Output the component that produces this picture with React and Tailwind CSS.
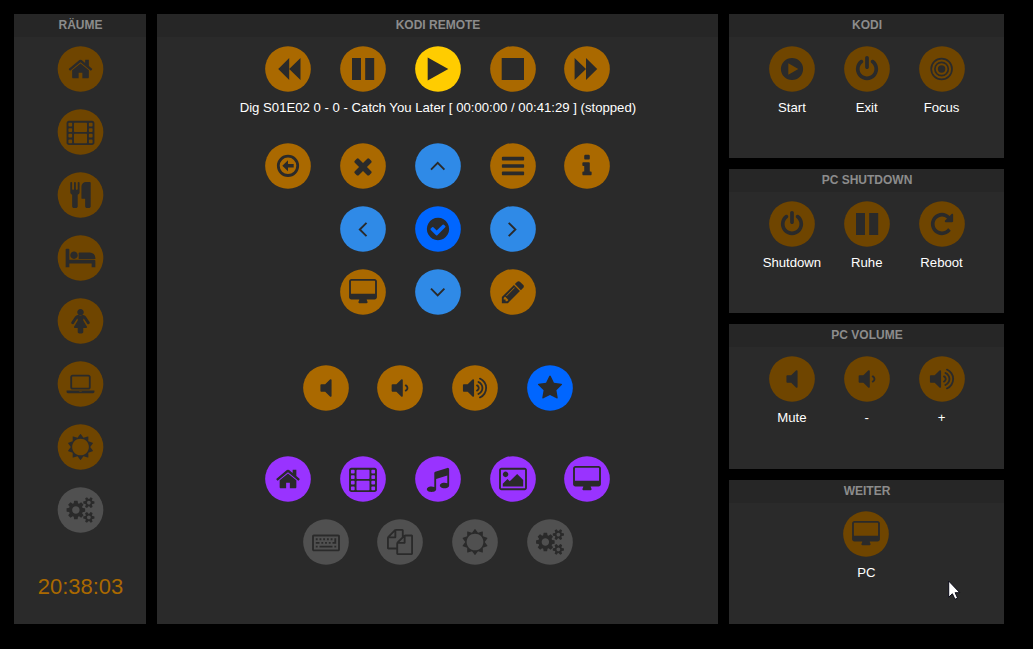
import React from "react";

const VOLUME_BODY = "v1088q0 26-19 45t-45 19-45-19l-333-333h-262q-26 0-45-19t-19-45v-384q0-26 19-45t45-19h262l333-333q19-19 45-19t45 19 19 45z";
const VOLUME_WAVE = "m384 544q0 76-42.500 141.500t-112.500 93.500q-10 5-25 5-26 0-45-18.500t-19-45.500q0-21 12-35.500t29-25 34-23 29-36 12-56.500-12-56.500-29-36-34-23-29-25-12-35.500q0-27 19-45.500t45-18.500q15 0 25 5 70 27 112.500 93t42.500 142z";
const VOLUME_WAVES = "m256 0q0 153-85 282.500t-225 188.500q-13 5-25 5-27 0-46-19t-19-45q0-39 39-59 56-29 76-44 74-54 115.500-135.500t41.500-173.500-41.500-173.500-115.500-135.500q-20-15-76-44-39-20-39-59 0-26 19-45t45-19q13 0 26 5 140 59 225 188.500t85 282.500zm256 0q0 230-127 422.500t-338 283.500q-13 5-26 5-26 0-45-19t-19-45q0-36 39-59 7-4 22.500-10.500t22.500-10.500q46-25 82-51 123-91 192-227t69-289-69-289-192-227q-36-26-82-51-7-4-22.500-10.500t-22.500-10.500q-39-23-39-59 0-26 19-45t45-19q13 0 26 5 211 91 338 283.500t127 422.500z";

// Glyphs on a 1792-unit grid
const GLYPHS = {
  home: "M1472 992v480q0 26-19 45t-45 19h-384v-384h-256v384h-384q-26 0-45-19t-19-45v-480q0-1 .5-3t.5-3l575-474 575 474q1 2 1 6zm223-69l-62 74q-8 9-21 11h-3q-13 0-21-7l-692-577-692 577q-12 8-24 7-13-2-21-11l-62-74q-8-10-7-23.500t11-21.500l719-599q32-26 76-26t76 26l244 204v-195q0-14 9-23t23-9h192q14 0 23 9t9 23v408l219 182q10 8 11 21.500t-7 23.500z",
  cutlery: "M832 64v640q0 61-35.500 111t-92.500 70v779q0 52-38 90t-90 38h-128q-52 0-90-38t-38-90v-779q-57-20-92.500-70t-35.500-111v-640q0-26 19-45t45-19 45 19 19 45v416q0 26 19 45t45 19 45-19 19-45v-416q0-26 19-45t45-19 45 19 19 45v416q0 26 19 45t45 19 45-19 19-45v-416q0-26 19-45t45-19 45 19 19 45zm768 0v1600q0 52-38 90t-90 38h-128q-52 0-90-38t-38-90v-512h-224q-13 0-22.500-9.500t-9.500-22.500v-800q0-132 94-226t226-94h256q26 0 45 19t19 45z",
  bed: "M128 1024h1728q26 0 45 19t19 45v448h-256v-256h-1536v256h-256v-1216q0-26 19-45t45-19h128q26 0 45 19t19 45v704zm576-320q0-106-75-181t-181-75-181 75-75 181 75 181 181 75 181-75 75-181zm1216 256v-64q0-159-112.500-271.500t-271.500-112.500h-704q-26 0-45 19t-19 45v384h1152z",
  female: "M1536 1024q0 40-28 68t-68 28q-51 0-80-43l-227-341h-45v132l247 411q9 15 9 33 0 26-19 45t-45 19h-192v272q0 46-33 79t-79 33h-160q-46 0-79-33t-33-79v-272h-192q-26 0-45-19t-19-45q0-18 9-33l247-411v-132h-45l-227 341q-29 43-80 43-40 0-68-28t-28-68q0-29 16-53l256-384q73-107 176-107h384q103 0 176 107l256 384q16 24 16 53zm-416-736q0 93-65.500 158.500t-158.500 65.500-158.500-65.500-65.500-158.500 65.500-158.500 158.500-65.500 158.500 65.500 65.500 158.500z",
  laptop: "M352 1280q-66 0-113-47t-47-113v-704q0-66 47-113t113-47h1088q66 0 113 47t47 113v704q0 66-47 113t-113 47h-1088zm-32-864v704q0 13 9.500 22.500t22.500 9.500h1088q13 0 22.500-9.500t9.500-22.500v-704q0-13-9.500-22.500t-22.500-9.500h-1088q-13 0-22.500 9.500t-9.500 22.500zm1376 928h160v96q0 40-47 68t-113 28h-1600q-66 0-113-28t-47-68v-96h1760zm-720 96q16 0 16-16t-16-16h-160q-16 0-16 16t16 16h160z",
  sun: "M1472 896q0-117-45.500-223.500t-123-184-184-123-223.500-45.500-223.500 45.500-184 123-123 184-45.500 223.500 45.500 223.500 123 184 184 123 223.500 45.500 223.500-45.500 184-123 123-184 45.500-223.500zm276 277q-4 15-20 20l-292 96v306q0 16-13 26-15 10-29 4l-292-94-180 248q-10 13-26 13t-26-13l-180-248-292 94q-14 6-29-4-13-10-13-26v-306l-292-96q-16-5-20-20-5-17 4-29l180-248-180-248q-9-13-4-29 4-15 20-20l292-96v-306q0-16 13-26 15-10 29-4l292 94 180-248q9-12 26-12t26 12l180 248 292-94q14-6 29 4 13 10 13 26v306l292 96q16 5 20 20 5 16-4 29l-180 248 180 248q9 12 4 29z",
  gears: "M832 896q0-106-75-181t-181-75-181 75-75 181 75 181 181 75 181-75 75-181zm768 512q0-52-38-90t-90-38-90 38-38 90q0 53 37.500 90.500t90.500 37.500 90.500-37.500 37.500-90.500zm0-1024q0-52-38-90t-90-38-90 38-38 90q0 53 37.500 90.500t90.500 37.500 90.500-37.500 37.500-90.500zm-384 421v185q0 10-7 19.500t-16 10.500l-155 24q-11 35-32 76 34 48 90 115 7 11 7 20 0 12-7 19-23 30-82.500 89.500t-78.500 59.500q-11 0-21-7l-115-90q-37 19-77 31-11 108-23 155-7 24-30 24h-186q-11 0-20-7.500t-10-17.500l-23-153q-34-10-75-31l-118 89q-7 7-20 7-11 0-21-8-144-133-144-160 0-9 7-19 10-14 41-53t47-61q-23-44-35-82l-152-24q-10-1-17-9.500t-7-19.500v-185q0-10 7-19.500t16-10.500l155-24q11-35 32-76-34-48-90-115-7-11-7-20 0-12 7-20 22-30 82-89t79-59q11 0 21 7l115 90q34-18 77-32 11-108 23-154 7-24 30-24h186q11 0 20 7.500t10 17.500l23 153q34 10 75 31l118-89q8-7 20-7 11 0 21 8 144 133 144 160 0 9-7 19-12 16-42 54t-45 60q23 48 34 82l152 23q10 2 17 10.500t7 19.500zm640 533v140q0 16-149 31-12 27-30 52 51 113 51 138 0 4-4 7-122 71-124 71-8 0-46-47t-52-68q-20 2-30 2t-30-2q-14 21-52 68t-46 47q-2 0-124-71-4-3-4-7 0-25 51-138-18-25-30-52-149-15-149-31v-140q0-16 149-31 13-29 30-52-51-113-51-138 0-4 4-7 4-2 35-20t59-34 30-16q8 0 46 46.500t52 67.500q20-2 30-2t30 2q51-71 92-112l6-2q4 0 124 70 4 3 4 7 0 25-51 138 17 23 30 52 149 15 149 31zm0-1024v140q0 16-149 31-12 27-30 52 51 113 51 138 0 4-4 7-122 71-124 71-8 0-46-47t-52-68q-20 2-30 2t-30-2q-14 21-52 68t-46 47q-2 0-124-71-4-3-4-7 0-25 51-138-18-25-30-52-149-15-149-31v-140q0-16 149-31 13-29 30-52-51-113-51-138 0-4 4-7 4-2 35-20t59-34 30-16q8 0 46 46.500t52 67.500q20-2 30-2t30 2q51-71 92-112l6-2q4 0 124 70 4 3 4 7 0 25-51 138 17 23 30 52 149 15 149 31z",
  times: "M1490 1322q0 40-28 68l-136 136q-28 28-68 28t-68-28l-294-294-294 294q-28 28-68 28t-68-28l-136-136q-28-28-28-68t28-68l294-294-294-294q-28-28-28-68t28-68l136-136q28-28 68-28t68 28l294 294 294-294q28-28 68-28t68 28l136 136q28 28 28 68t-28 68l-294 294 294 294q28 28 28 68z",
  bars: "M1664 1344v128q0 26-19 45t-45 19h-1408q-26 0-45-19t-19-45v-128q0-26 19-45t45-19h1408q26 0 45 19t19 45zm0-512v128q0 26-19 45t-45 19h-1408q-26 0-45-19t-19-45v-128q0-26 19-45t45-19h1408q26 0 45 19t19 45zm0-512v128q0 26-19 45t-45 19h-1408q-26 0-45-19t-19-45v-128q0-26 19-45t45-19h1408q26 0 45 19t19 45z",
  info: "M1216 1344v128q0 26-19 45t-45 19h-512q-26 0-45-19t-19-45v-128q0-26 19-45t45-19h64v-384h-64q-26 0-45-19t-19-45v-128q0-26 19-45t45-19h384q26 0 45 19t19 45v576h64q26 0 45 19t19 45zm-128-1152v192q0 26-19 45t-45 19h-256q-26 0-45-19t-19-45v-192q0-26 19-45t45-19h256q26 0 45 19t19 45z",
  check: "M1412 734q0-28-18-46l-91-90q-19-19-45-19t-45 19l-408 407-226-226q-19-19-45-19t-45 19l-91 90q-18 18-18 46 0 27 18 45l362 362q19 19 45 19 27 0 46-19l543-543q18-18 18-45zm252 162q0 209-103 385.500t-279.500 279.500-385.500 103-385.500-103-279.500-279.500-103-385.500 103-385.500 279.500-279.500 385.500-103 385.500 103 279.500 279.500 103 385.500z",
  desktop: "M1728 992v-832q0-13-9.500-22.500t-22.500-9.500h-1600q-13 0-22.500 9.500t-9.500 22.500v832q0 13 9.500 22.500t22.500 9.500h1600q13 0 22.500-9.500t9.500-22.500zm128-832v1088q0 66-47 113t-113 47h-544q0 37 16 77.500t32 71 16 43.500q0 26-19 45t-45 19h-512q-26 0-45-19t-19-45q0-14 16-44t32-70 16-78h-544q-66 0-113-47t-47-113v-1088q0-66 47-113t113-47h1600q66 0 113 47t47 113z",
  pencil: "M491 1536l91-91-235-235-91 91v107h128v128h107zm523-928q0-22-22-22-10 0-17 7l-542 542q-7 7-7 17 0 22 22 22 10 0 17-7l542-542q7-7 7-17zm-54-192l416 416-832 832h-416v-416zm683 96q0 53-37 90l-166 166-416-416 166-165q36-38 90-38 53 0 91 38l235 234q37 39 37 91z",
  mute: "M1280 352" + VOLUME_BODY,
  quieter: "M1088 352" + VOLUME_BODY + VOLUME_WAVE,
  louder: "M832 352" + VOLUME_BODY + VOLUME_WAVE + VOLUME_WAVES,
  star: "M1728 647q0 22-26 48l-363 354 86 500q1 7 1 20 0 21-10.500 35.500t-30.500 14.500q-19 0-40-12l-449-236-449 236q-22 12-40 12-21 0-31.500-14.500t-10.500-35.500q0-6 2-20l86-500-364-354q-25-27-25-48 0-37 56-46l502-73 225-455q19-41 49-41t49 41l225 455 502 73q56 9 56 46z",
  music: "M1664 224v1120q0 50-34 89t-86 60.500-103.500 32-96.500 10.500-96.500-10.500-103.500-32-86-60.500-34-89 34-89 86-60.500 103.500-32 96.500-10.500q105 0 192 39v-537l-768 237v709q0 50-34 89t-86 60.500-103.500 32-96.500 10.500-96.500-10.500-103.500-32-86-60.500-34-89 34-89 86-60.500 103.500-32 96.500-10.500q105 0 192 39v-967q0-31 19-56.500t49-35.500l832-256q12-4 28-4 40 0 68 28t28 68z",
  picture: "M576 576q0 80-56 136t-136 56-136-56-56-136 56-136 136-56 136 56 56 136zm1024 384v448h-1408v-192l320-320 160 160 512-512zm96-704h-1600q-13 0-22.500 9.500t-9.500 22.500v1216q0 13 9.500 22.500t22.500 9.500h1600q13 0 22.500-9.500t9.500-22.500v-1216q0-13-9.500-22.500t-22.500-9.500zm160 32v1216q0 66-47 113t-113 47h-1600q-66 0-113-47t-47-113v-1216q0-66 47-113t113-47h1600q66 0 113 47t47 113z",
  files: "M1696 384q40 0 68 28t28 68v1216q0 40-28 68t-68 28h-960q-40 0-68-28t-28-68v-288h-544q-40 0-68-28t-28-68v-672q0-40 20-88t48-76l408-408q28-28 76-48t88-20h416q40 0 68 28t28 68v328q68-40 128-40h416zm-544 213l-299 299h299v-299zm-640-384l-299 299h299v-299zm196 647l316-316v-416h-384v416q0 40-28 68t-68 28h-416v640h512v-256q0-40 20-88t48-76zm956 804v-1152h-384v416q0 40-28 68t-68 28h-416v640h896z",
  power: "M1664 896q0 156-61 298t-164 245-245 164-298 61-298-61-245-164-164-245-61-298q0-182 80.500-343t226.500-270q43-32 95.500-25t83.500 50q32 42 24.500 94.500t-49.500 84.500q-98 74-151.500 181t-53.500 228q0 104 40.500 198.500t109.500 163.500 163.500 109.500 198.500 40.500 198.500-40.500 163.500-109.500 109.500-163.500 40.500-198.500q0-121-53.500-228t-151.500-181q-42-32-49.500-84.500t24.500-94.500q31-43 84-50t95 25q146 109 226.500 270t80.500 343zm-640-768v640q0 52-38 90t-90 38-90-38-38-90v-640q0-52 38-90t90-38 90 38 38 90z",
  repeat: "M1664 256v448q0 26-19 45t-45 19h-448q-42 0-59-40-17-39 14-69l138-138q-148-137-349-137-104 0-198.500 40.500t-163.500 109.500-109.500 163.500-40.500 198.500 40.500 198.500 109.500 163.500 163.500 109.500 198.500 40.500q119 0 225-52t179-147q7-10 23-12 15 0 25 9l137 138q9 8 9.500 20.500t-7.500 22.500q-109 132-264 204.500t-327 72.500q-156 0-298-61t-245-164-164-245-61-298 61-298 164-245 245-164 298-61q147 0 284.500 55.500t244.500 156.500l130-129q29-31 70-14 39 17 39 59z",
};

const hole = (x, y, w, h) => `M${x + 50} ${y}h${w - 100}q50 0 50 50v${h - 100}q0 50-50 50h${100 - w}q-50 0-50-50v${100 - h}q0-50 50-50z`;
GLYPHS.film =
  "M96 128h1600q66 0 113 47t47 113v1344q0 66-47 113t-113 47h-1600q-66 0-113-47t-47-113v-1344q0-66 47-113t113-47z" +
  [256, 640, 1024, 1408].map((y) => hole(64, y, 256, 256) + hole(1472, y, 256, 256)).join("") +
  hole(448, 256, 896, 640) + hole(448, 1024, 896, 640);

const box = (x, y, w, h) => `M${x} ${y}h${w}v${h}h${-w}z`;
GLYPHS.keyboard =
  "M64 384h1664q53 0 90.500 37.500t37.500 90.500v896q0 53-37.500 90.500t-90.500 37.500h-1664q-53 0-90.500-37.500t-37.500-90.500v-896q0-53 37.500-90.500t90.500-37.500z" +
  box(64, 512, 1664, 896) +
  [192, 448, 704, 960, 1216].map((x) => box(x, 640, 128, 128)).join("") +
  "M1472 640h128v384h-256v-128h128z" +
  box(192, 896, 256, 128) + box(576, 896, 128, 128) + box(832, 896, 128, 128) + box(1088, 896, 128, 128) +
  box(192, 1152, 128, 128) + box(448, 1152, 896, 128) + box(1472, 1152, 128, 128);

// Simple shapes on the 46px button grid
const SHAPES = {
  backward: <path d="M13.200 23L24.200 12V23L35.500 12V34L24.200 23V34Z" />,
  forward: <path d="M33.200 23L22 12V23L10.600 12V34L22 23V34Z" />,
  pause: <path d="M12 12h9v22h-9zM25.200 12h9v22h-9z" />,
  play: <path d="M12.700 11.500L33.300 23L12.700 34.500Z" />,
  stop: <path d="M11.700 12h22.300v22h-22.300z" />,
  back: (
    <>
      <circle cx="23" cy="22.800" r="9.700" fill="none" stroke="currentColor" strokeWidth="2.800" />
      <path d="M17.300 22.800L23 17.300V21H28.700V24.600H23V28.300Z" />
    </>
  ),
  up: <path d="M16 26.600L22.700 19.900L29.400 26.600" fill="none" stroke="currentColor" strokeWidth="1.900" />,
  down: <path d="M16 19.600L22.700 26.300L29.400 19.600" fill="none" stroke="currentColor" strokeWidth="1.900" />,
  left: <path d="M26.500 16.800L19.800 23.500L26.500 30.200" fill="none" stroke="currentColor" strokeWidth="1.900" />,
  right: <path d="M18.700 16.800L25.400 23.500L18.700 30.200" fill="none" stroke="currentColor" strokeWidth="1.900" />,
  start: <path fillRule="evenodd" d="M34.100 23a11.100 11.100 0 1 0-22.200 0a11.100 11.100 0 1 0 22.200 0zM19.300 17.200L29.300 23L19.300 28.800Z" />,
  focus: (
    <>
      <circle cx="22.600" cy="23" r="3.700" />
      <circle cx="22.600" cy="23" r="6.700" fill="none" stroke="currentColor" strokeWidth="1.700" />
      <circle cx="22.600" cy="23" r="10.400" fill="none" stroke="currentColor" strokeWidth="1.700" />
    </>
  ),
};

const TONES = {
  amber: "text-[#aa6900]",
  dim: "text-[#6f4500]",
  yellow: "text-[#ffcc00]",
  sky: "text-[#2f8ae7]",
  blue: "text-[#0066ff]",
  purple: "text-[#9933ff]",
  gray: "text-[#505050]",
};

function Button({ icon, tone = "amber", label, viewBox = "0 0 46 46" }) {
  return (
    <button className="flex w-[74.800px] flex-col items-center">
      <svg viewBox={viewBox} className={"block size-[46px] overflow-visible " + TONES[tone]}>
        <circle cx="23" cy="23" r="22.850" fill="currentColor" />
        <g className="text-[#2a2a2a]" fill="currentColor">
          {SHAPES[icon] || <path fillRule="evenodd" transform="translate(10 10) scale(0.014509)" d={GLYPHS[icon]} />}
        </g>
      </svg>
      {label && <span className="mt-2 text-[13.170px] leading-4 text-white">{label}</span>}
    </button>
  );
}

function Row({ items, className = "" }) {
  return (
    <div className={"flex justify-center " + className}>
      {items.map(([icon, tone, label], i) => (
        <Button key={i} icon={icon} tone={tone} label={label} />
      ))}
    </div>
  );
}

function Panel({ title, className, children }) {
  return (
    <section className={"flex flex-col bg-[#2a2a2a] " + className}>
      <h2 className="h-[23px] shrink-0 bg-[#262626] pl-px text-center text-[12px] leading-[22px] font-bold text-[#8c8c8c]">{title}</h2>
      {children}
    </section>
  );
}

export default function App() {
  return (
    <div className="relative flex h-[649px] w-[1033px] gap-[11px] overflow-hidden bg-black pt-[14px] pl-[14px] font-['Liberation_Sans',Arial,sans-serif]">
      <Panel title="RÄUME" className="h-[610px] w-[132px]">
        <nav className="mt-[9px] flex flex-col items-center gap-[17px]">
          {["home", "film", "cutlery", "bed", "female", "laptop", "sun"].map((icon) => (
            <Button key={icon} icon={icon} tone="dim" viewBox="-0.5 0 46 46" />
          ))}
          <Button icon="gears" tone="gray" viewBox="-0.5 0 46 46" />
        </nav>
        <div className="mt-[41px] pl-px text-center text-[22px] leading-[26px] text-[#aa6900]">20:38:03</div>
      </Panel>

      <Panel title="KODI REMOTE" className="h-[610px] w-[561px]">
        <div className="pl-[0.800px]">
          <Row className="mt-[9px]" items={[["backward", "amber"], ["pause", "amber"], ["play", "yellow"], ["stop", "amber"], ["forward", "amber"]]} />
          <p className="mt-2 text-center text-[13.170px] leading-4 text-white">Dig S01E02 0 - 0 - Catch You Later [ 00:00:00 / 00:41:29 ] (stopped)</p>
          <div className="mt-[27px] flex flex-col gap-[17px]">
            <Row items={[["back", "amber"], ["times", "amber"], ["up", "sky"], ["bars", "amber"], ["info", "amber"]]} />
            <Row items={[["left", "sky"], ["check", "blue"], ["right", "sky"]]} />
            <Row items={[["desktop", "amber"], ["down", "sky"], ["pencil", "amber"]]} />
          </div>
          <Row className="mt-[50px]" items={[["mute", "amber"], ["quieter", "amber"], ["louder", "amber"], ["star", "blue"]]} />
          <Row className="mt-[45px]" items={[["home", "purple"], ["film", "purple"], ["music", "purple"], ["picture", "purple"], ["desktop", "purple"]]} />
          <Row className="mt-[17px]" items={[["keyboard", "gray"], ["files", "gray"], ["sun", "gray"], ["gears", "gray"]]} />
        </div>
      </Panel>

      <div className="flex w-[275px] flex-col gap-[11px]">
        <Panel title="KODI" className="h-[144px]">
          <Row className="mt-[9px] pl-[0.500px]" items={[["start", "dim", "Start"], ["power", "dim", "Exit"], ["focus", "dim", "Focus"]]} />
        </Panel>
        <Panel title="PC SHUTDOWN" className="h-[144px]">
          <Row className="mt-[9px] pl-[0.500px]" items={[["power", "dim", "Shutdown"], ["pause", "dim", "Ruhe"], ["repeat", "dim", "Reboot"]]} />
        </Panel>
        <Panel title="PC VOLUME" className="h-[145px]">
          <Row className="mt-[9px] pl-[0.500px]" items={[["mute", "dim", "Mute"], ["quieter", "dim", "-"], ["louder", "dim", "+"]]} />
        </Panel>
        <Panel title="WEITER" className="h-[144px]">
          <Row className="mt-[8px]" items={[["desktop", "dim", "PC"]]} />
        </Panel>
      </div>

      <svg viewBox="0 0 13 20" className="absolute top-[580px] left-[948px] h-5 w-[13px]">
        <path d="M.7 1V17.200L4.400 13.800L7 19.300L9.600 18.100L7.100 12.700H11.800Z" fill="#fff" stroke="#0a0a18" strokeWidth="1" />
      </svg>
    </div>
  );
}
